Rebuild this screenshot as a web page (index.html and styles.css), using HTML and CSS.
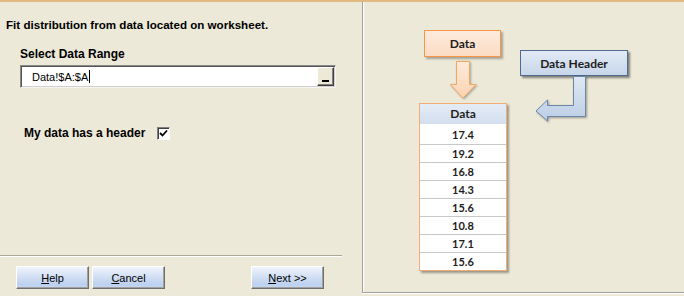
FILE: index.html
```html
<!DOCTYPE html>
<html lang="en">
<head>
    <meta charset="UTF-8">
    <title>Fit Distribution</title>
    <link rel="stylesheet" href="styles.css">
</head>
<body>

    <div class="window">

        <!-- Lado esquerdo: opções -->
        <div class="left-panel">
            <div class="intro">Fit distribution from data located on worksheet.</div>

            <div class="field-label">Select Data Range</div>
            <div class="range-input">
                <span class="range-text">Data!$A:$A</span><span class="caret"></span>
                <button class="range-btn"><span class="bar"></span></button>
            </div>

            <div class="header-check">
                <span>My data has a header</span>
                <span class="checkbox">
                    <svg width="9" height="9" viewBox="0 0 9 9"><path d="M1 4 L3.5 6.5 L8 1.5" fill="none" stroke="#000" stroke-width="1.8"/></svg>
                </span>
            </div>

            <div class="footer">
                <div class="separator"></div>
                <div class="buttons">
                    <button class="btn"><u>H</u>elp</button>
                    <button class="btn"><u>C</u>ancel</button>
                    <button class="btn next"><u>N</u>ext &gt;&gt;</button>
                </div>
            </div>
        </div>

        <!-- Lado direito: diagrama -->
        <div class="right-panel">
            <div class="diagram">
                <div class="box data-box">Data</div>

                <svg class="arrow-down" width="28" height="42" viewBox="0 0 28 42">
                    <defs>
                        <linearGradient id="og" x1="0" y1="0" x2="0" y2="1">
                            <stop offset="0" stop-color="#fdeadb"/>
                            <stop offset="1" stop-color="#fbd3b1"/>
                        </linearGradient>
                    </defs>
                    <polygon points="6.5,2.5 19.5,2.5 19.5,25.5 26,25.5 13,39 0.5,25.5 6.5,25.5" fill="url(#og)" stroke="#f2a865" stroke-width="1"/>
                </svg>

                <div class="box header-box">Data Header</div>

                <svg class="arrow-left" width="56" height="50" viewBox="0 0 56 50">
                    <defs>
                        <linearGradient id="bg" x1="0" y1="0" x2="0" y2="1">
                            <stop offset="0" stop-color="#dfe8f3"/>
                            <stop offset="1" stop-color="#bccee6"/>
                        </linearGradient>
                    </defs>
                    <polygon points="38.5,1.5 50.5,1.5 50.5,41.5 12.5,41.5 12.5,46 1,36 12.5,25 12.5,30.5 38.5,30.5" fill="url(#bg)" stroke="#6c86a8" stroke-width="1"/>
                </svg>

                <div class="data-table">
                    <div class="th">Data</div>
                    <div class="td">17.4</div>
                    <div class="td">19.2</div>
                    <div class="td">16.8</div>
                    <div class="td">14.3</div>
                    <div class="td">15.6</div>
                    <div class="td">10.8</div>
                    <div class="td">17.1</div>
                    <div class="td">15.6</div>
                </div>
            </div>
        </div>

    </div>

</body>
</html>
```

FILE: styles.css
```css
/* Estilos globais */
body {
    margin: 0;
    background-color: #ece9d8;
    font-family: "Liberation Sans", Arial, sans-serif;
    font-size: 11px;
    color: #000;
}

.window {
    display: flex;
    align-items: flex-start;
    height: 294px;
    border-top: 2px solid #e2b980;
}

/* Painel esquerdo */
.left-panel {
    width: 362px;
    height: 294px;
    display: flex;
    flex-direction: column;
}

.intro {
    margin: 16px 0 0 6px;
    line-height: 14px;
    font-weight: bold;
    font-size: 11.6px;
}

.field-label {
    margin: 15px 0 0 20px;
    line-height: 14px;
    font-weight: bold;
    font-size: 12px;
}

.range-input {
    margin: 4px 0 0 20px;
    width: 316px;
    height: 23px;
    box-sizing: border-box;
    display: flex;
    align-items: center;
    background: #fff;
    border: 1px solid;
    border-color: #8a8a8a #f4f4f4 #f4f4f4 #8a8a8a;
    box-shadow: inset 1px 1px #555, inset -1px -1px #d4d0c8;
}

.range-text {
    padding-left: 11px;
    font-size: 11px;
}

.caret {
    width: 1px;
    height: 13px;
    background: #000;
    margin-left: 1px;
    flex: 1;
    max-width: 1px;
}

.range-btn {
    margin-left: auto;
    margin-right: 1px;
    width: 17px;
    height: 19px;
    padding: 0;
    box-sizing: border-box;
    background: #ece9d8;
    border: 1px solid;
    border-color: #fff #404040 #404040 #fff;
    box-shadow: inset -1px -1px #808080;
    display: flex;
    align-items: flex-end;
    justify-content: center;
}

.range-btn .bar {
    width: 7px;
    height: 2px;
    background: #000;
    margin-bottom: 3px;
}

.header-check {
    margin: 38px 0 0 24px;
    line-height: 14px;
    font-weight: bold;
    font-size: 12px;
    display: flex;
    align-items: center;
    gap: 12px;
}

.checkbox {
    width: 13px;
    height: 13px;
    box-sizing: border-box;
    background: #fff;
    border: 1px solid;
    border-color: #808080 #fff #fff #808080;
    box-shadow: inset 1px 1px #404040;
    display: flex;
    align-items: center;
    justify-content: center;
}

/* Rodapé com botões */
.footer {
    margin-top: auto;
    padding-bottom: 7px;
}

.separator {
    width: 342px;
    height: 1px;
    background: #aca899;
    border-bottom: 1px solid #fff;
}

.buttons {
    display: flex;
    gap: 3px;
    margin-top: 9px;
    padding-left: 16px;
}

.btn {
    width: 73px;
    height: 23px;
    padding: 0;
    font-family: "Liberation Sans", Arial, sans-serif;
    font-size: 11px;
    color: #000;
    background: linear-gradient(#f1f5fc, #d3e0f5 45%, #bcd0ef 85%, #c9d9f2);
    border: 1px solid;
    border-color: #fff #6f6f6f #6f6f6f #fff;
    box-shadow: inset -1px -1px #a0a0a0;
}

.btn.next {
    margin-left: 83px;
}

/* Painel direito com o diagrama */
.right-panel {
    flex: 1;
    height: 290px;
    border-left: 1px solid #a0a0a0;
    border-bottom: 1px solid #a0a0a0;
    box-shadow: inset 1px 0 #fff, 0 1px #fff;
}

.diagram {
    position: relative;
    height: 100%;
    font-family: Lato, "Open Sans", sans-serif;
    font-weight: bold;
    color: #1e1e1e;
}

.box {
    position: absolute;
    box-sizing: border-box;
    display: flex;
    align-items: center;
    justify-content: center;
    font-size: 12px;
}

.data-box {
    left: 61px;
    top: 28px;
    width: 77px;
    height: 27px;
    background: linear-gradient(#fdebdd, #fcdcc3);
    border: 1px solid #f79646;
    box-shadow: 2px 2px 2px rgba(0, 0, 0, 0.3);
}

.header-box {
    left: 157px;
    top: 48px;
    width: 108px;
    height: 26px;
    background: linear-gradient(#e2eaf5, #c7d6ea);
    border: 1px solid #51698c;
    box-shadow: 2px 2px 2px rgba(0, 0, 0, 0.45);
}

.arrow-down {
    position: absolute;
    left: 87px;
    top: 57px;
    filter: drop-shadow(1px 1px 1px rgba(0, 0, 0, 0.3));
}

.arrow-left {
    position: absolute;
    left: 172px;
    top: 73px;
    filter: drop-shadow(1px 1px 1px rgba(0, 0, 0, 0.35));
}

.data-table {
    position: absolute;
    left: 56px;
    top: 101px;
    width: 88px;
    box-sizing: border-box;
    border: 1px solid #f3ac74;
    background: #fff;
    box-shadow: 2px 2px 2px rgba(0, 0, 0, 0.35);
}

.th {
    height: 20px;
    line-height: 20px;
    text-align: center;
    font-size: 12px;
    background: linear-gradient(#e4ecf6, #d3dfee);
    border-bottom: 1px solid #fff;
}

.td {
    height: 17px;
    line-height: 17px;
    text-align: center;
    font-size: 11px;
    border-bottom: 1px solid #c8c8c8;
}

.td:nth-child(2) {
    height: 19px;
    line-height: 19px;
}

.td:last-child {
    border-bottom: none;
}
```
